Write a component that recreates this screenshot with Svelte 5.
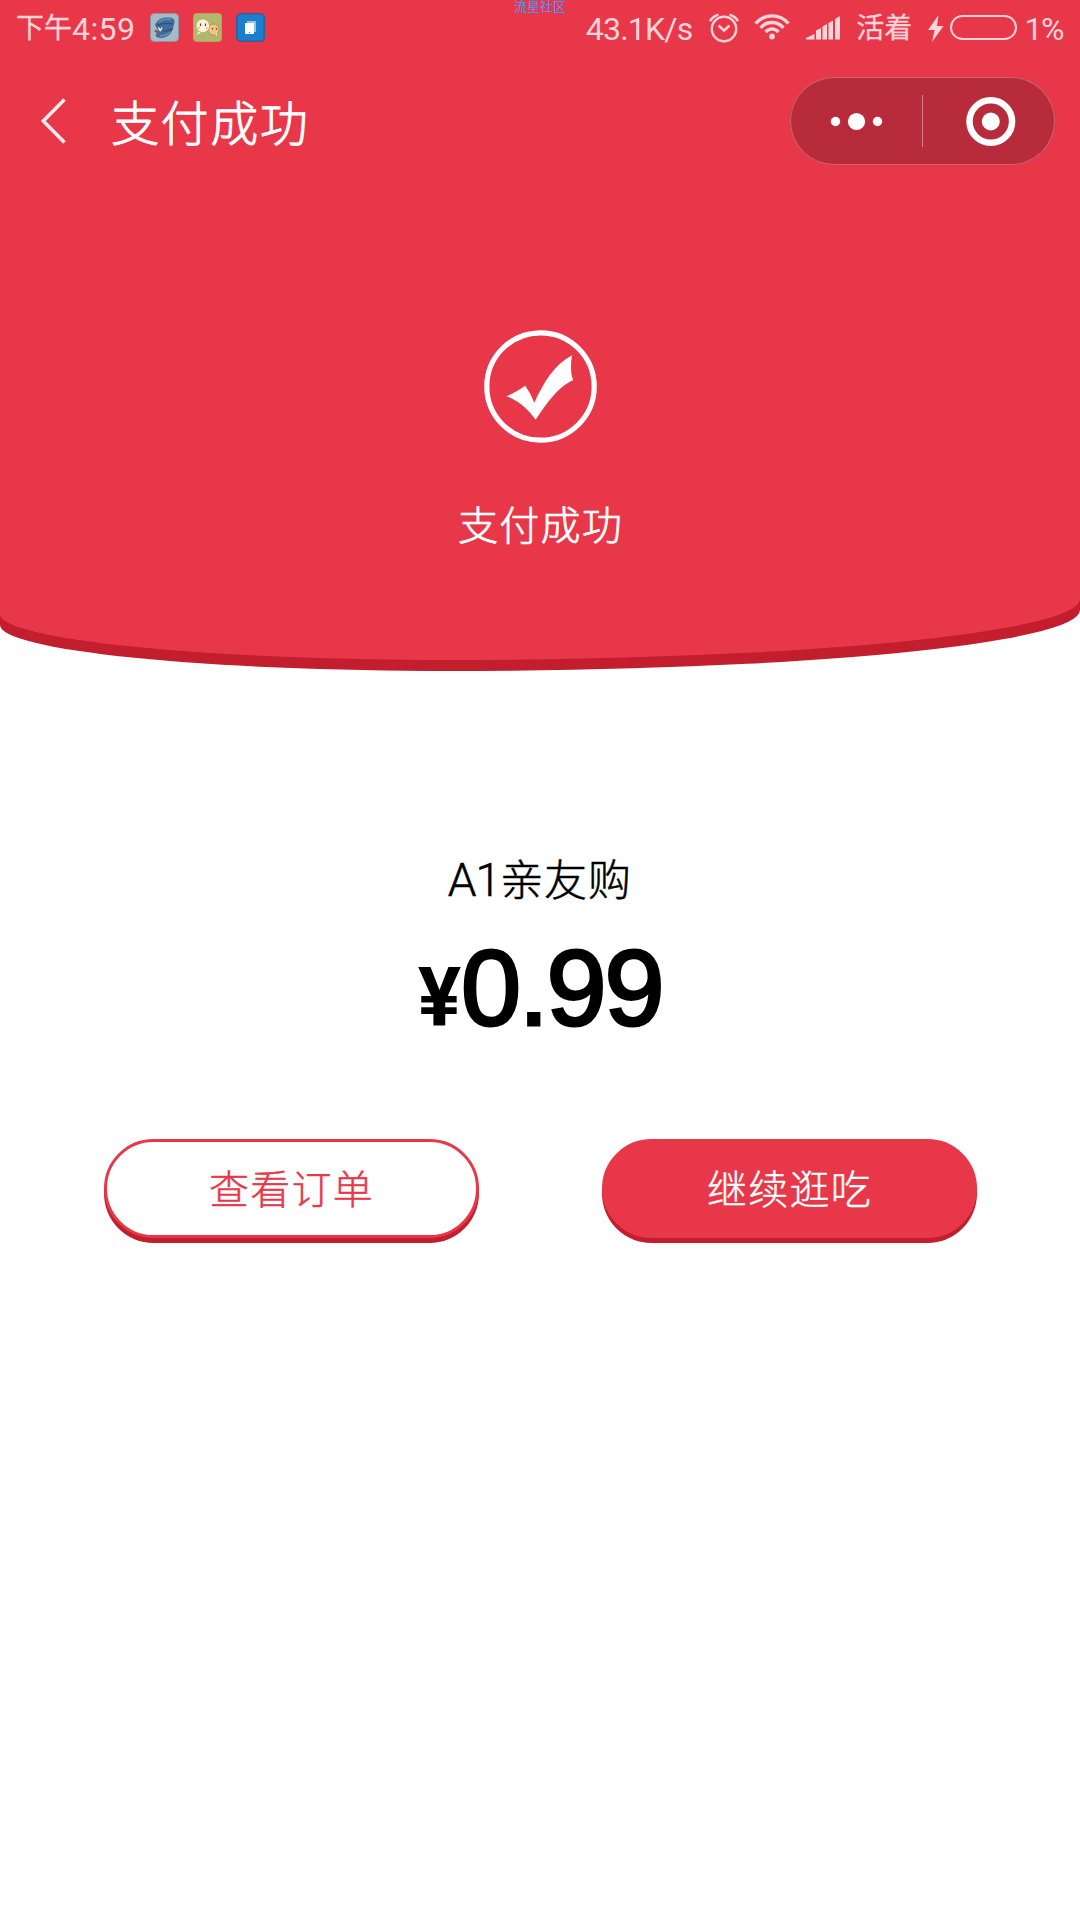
<script lang="ts">
	const status = {
		time: "下午",
		clock: "4:59",
		speed: "43.1K/s",
		carrier: "活着",
		battery: "1%",
	};

	const order = {
		name: "亲友购",
		prefix: "A1",
		price: "0.99",
	};
</script>

<div class="page">
	<header class="hero">
		<div class="watermark">流星社区</div>

		<div class="status">
			<div class="left">
				<span class="cn">{status.time}</span><span class="clock">{status.clock}</span>
				<svg class="app first" width="29" height="29" viewBox="0 0 29 29">
					<rect x=".5" y=".5" width="28" height="28" rx="4" fill="#a9bac7" stroke="#8799a9" />
					<path d="M5 12C7 7 11 4.500 17 4.500c6-.5 8 2 7.500 5l-2 7c-1 5-7 9-12 8.500-4-.5-6-2-4-4.500l1.500-3z" fill="#416d9b" />
					<path d="M7 12.500c4-2 9-3 16-1.500M13 18.500c4 0 7-1 10-3" fill="none" stroke="#2d5077" stroke-width="1.200" />
					<path d="M9 9.500c3-3 7-4 12-3M10 23c4 0 7-1 10-4" fill="none" stroke="#6591bb" stroke-width="1.400" />
					<path d="M4 18l2-1.500 4 3.500-3 .5z" fill="#8b5659" />
					<path d="M8.500 14.500l1.700 3 2-3" fill="none" stroke="#fff" stroke-width="1.300" />
				</svg>
				<svg class="app" width="29" height="29" viewBox="0 0 29 29">
					<rect x=".5" y=".5" width="28" height="28" rx="3" fill="#aeb96c" stroke="#c99b61" />
					<circle cx="20.500" cy="16.500" r="5.500" fill="#efc780" stroke="#c58c50" />
					<circle cx="9.800" cy="12.800" r="6.800" fill="#f7f4d9" stroke="#b9b184" />
					<path d="M5 18l-1 4 4-2M22 21l2 2v-3" fill="#f4e8c0" />
					<path d="M7.500 10.500v2.500M12.500 10.500v2.500M19.500 15v1.500M23.500 15v1.500" stroke="#633e2b" stroke-width="1.200" />
					<path d="M5 15h1.500M13 15h1.500" stroke="#ee9287" stroke-width="1.500" />
				</svg>
				<svg class="app" width="29" height="29" viewBox="0 0 29 29">
					<rect x=".8" y=".8" width="27.400" height="27.400" rx="4" fill="#1c7fce" stroke="#315f9b" stroke-width="1.600" />
					<path d="M11 8h9v11h-9z" fill="#8fc3ed" />
					<path d="M9 10h9v11H9z" fill="#fff" />
					<path d="M13 19h1v1h-1z" fill="#1c7fce" />
				</svg>
			</div>
			<div class="right">
				<span class="speed">{status.speed}</span>
				<svg class="alarm" width="30" height="30" viewBox="0 0 30 30" fill="none" stroke="currentColor">
					<circle cx="15" cy="16" r="12.200" stroke-width="2.400" />
					<path d="M1 8Q4 3 9.500 1.700M20.500 1.700Q26 3 29 8" stroke-width="2.600" />
					<path d="M9.500 12.500l5.500 5 5.500-5" stroke-width="2.600" />
				</svg>
				<svg class="wifi" width="36" height="27" viewBox="0 0 36 27" fill="none" stroke="currentColor" stroke-width="3.400">
					<path d="M1.500 10.500C10.500 .3 25.500 .3 34.500 10.500" />
					<path d="M6.500 14.800c6.500-7 16.500-7 23 0" />
					<path d="M11.500 19c4-4 9-4 13 0" />
					<circle cx="18" cy="23.500" r="2.900" fill="currentColor" stroke="none" />
				</svg>
				<svg class="signal" width="34" height="24" viewBox="0 0 34 24" fill="currentColor">
					<path d="M0 23.500v-1.500l8.500-4v5.500zM10 23.500v-9l5-2.500v11.500zM16.500 23.500v-13l4.500-2.500v15.500zM22.500 23.500V7L27 4.500v19zM29 23.500V3l5-3v23.500z" />
				</svg>
				<span class="cn carrier">{status.carrier}</span>
				<svg class="bolt" width="16" height="27" viewBox="0 0 16 27" fill="currentColor">
					<path d="M10.500 0L0 15h6.500L4 27 15.500 11H9z" />
				</svg>
				<span class="battery"><i></i></span>
				<span class="percent">{status.battery}</span>
			</div>
		</div>

		<nav>
			<svg width="26" height="46" viewBox="0 0 26 46" fill="none" stroke="#ffe9eb" stroke-width="3.600">
				<path d="M24.500 1.500L3.300 23l21.200 21.500" />
			</svg>
			<h1>支付成功</h1>
			<div class="capsule">
				<svg width="265" height="88" viewBox="0 0 265 88" fill="#fff">
					<circle cx="45.500" cy="44.500" r="4.700" />
					<circle cx="66.500" cy="44.500" r="8.600" />
					<circle cx="87.500" cy="44.500" r="4.700" />
					<path d="M132 18h1v52h-1z" opacity=".4" />
					<circle cx="200.800" cy="44.500" r="21.300" fill="none" stroke="#fff" stroke-width="6.500" />
					<circle cx="200.800" cy="44.500" r="9" />
				</svg>
			</div>
		</nav>

		<div class="result">
			<svg width="113" height="113" viewBox="0 0 113 113">
				<circle cx="56.500" cy="56.500" r="53.700" fill="none" stroke="#fff" stroke-width="5.200" />
				<path
					d="M22.700 66.300Q32.500 62 41.300 55.700Q46.500 63 50.300 72.700C60 52 70 35 88 25.300Q85.500 41 89 50.300C75 56 62 74 51.700 89.700C41 76 34 71 22.700 66.300z"
					fill="#fff"
				/>
			</svg>
			<p>支付成功</p>
		</div>
	</header>

	<main>
		<div class="name"><span>{order.prefix}</span>{order.name}</div>
		<div class="price"><span>¥</span>{order.price}</div>
		<div class="actions">
			<button class="outline">查看订单</button>
			<button class="solid">继续逛吃</button>
		</div>
	</main>
</div>

<style>
	:global(body) {
		background: #fff;
	}

	.page {
		width: 1080px;
		height: 1920px;
		overflow: hidden;
		background: #fff;
		font-family: "Noto Sans CJK SC", sans-serif;
		font-weight: 300;
	}

	.hero {
		position: relative;
		box-sizing: border-box;
		height: 660px;
		color: #fff;
		background: #e83749;
		border-radius: 0 0 630px 450px / 0 0 61px 46px;
		box-shadow: 0 11px 0 #c21e2e;
	}

	.watermark {
		position: absolute;
		top: 0;
		left: 514px;
		font-family: "Liberation Sans", "Noto Sans CJK SC", sans-serif;
		font-size: 13px;
		font-weight: 400;
		line-height: 14px;
		color: #3d9bff;
	}

	.status {
		display: flex;
		justify-content: space-between;
		box-sizing: border-box;
		height: 56px;
		padding: 0 17px 0 16px;
		font-family: Roboto, "Noto Sans CJK SC", sans-serif;
		font-size: 32px;
		font-weight: 400;
		line-height: 58px;
		color: #ffd3d8;
	}

	.left,
	.right {
		display: flex;
		align-items: center;
	}

	.status span:not(.battery) {
		padding-top: 2px;
	}

	.status .cn {
		padding-top: 6px;
		font-size: 28px;
		-webkit-text-stroke: 0.3px currentColor;
	}

	.clock {
		letter-spacing: 0.4px;
	}

	.app {
		margin: 0 0 1px 14px;
	}

	.app.first {
		margin-left: 15px;
	}

	.speed {
		letter-spacing: -0.8px;
	}

	.alarm {
		margin: 0 0 1px 17px;
	}

	.wifi {
		margin: 0 0 3px 15px;
	}

	.signal {
		margin-left: 16px;
	}

	.carrier {
		margin-left: 16px;
	}

	.bolt {
		margin-left: 16px;
	}

	.battery {
		display: flex;
		align-items: center;
		justify-content: flex-end;
		box-sizing: border-box;
		width: 67px;
		height: 25px;
		margin: 0 0 1px 6px;
		padding-right: 1px;
		border: 2px solid currentColor;
		border-radius: 13px;
	}

	.battery i {
		width: 1px;
		height: 8px;
		background: #6f8a1c;
	}

	.percent {
		margin-left: 7px;
		letter-spacing: -1.4px;
	}

	nav {
		display: flex;
		align-items: center;
		height: 129px;
		padding: 0 25px 0 40px;
	}

	h1 {
		margin: -2px 0 0 45px;
		font-size: 48px;
		font-weight: 300;
		letter-spacing: 1.600px;
		-webkit-text-stroke: 0.9px currentColor;
	}

	.capsule {
		box-sizing: border-box;
		width: 265px;
		height: 88px;
		margin-left: auto;
		background: #b82b3a;
		border-radius: 44px;
		box-shadow: inset 0 0 0 1px #cd6570;
	}

	.result {
		display: flex;
		flex-direction: column;
		align-items: center;
		padding-top: 145px;
	}

	.result p {
		margin: 50px 0 0;
		font-size: 40px;
		line-height: 60px;
		letter-spacing: 1.300px;
		text-indent: 1px;
		-webkit-text-stroke: 0.7px currentColor;
	}

	main {
		color: #000;
	}

	.name {
		display: flex;
		justify-content: center;
		align-items: baseline;
		margin-top: 187px;
		font-size: 43px;
		line-height: 60px;
		letter-spacing: 1px;
		-webkit-text-stroke: 0.5px currentColor;
	}

	.name span {
		font-family: Roboto, sans-serif;
		font-size: 46px;
		letter-spacing: -1px;
	}

	.price {
		display: flex;
		justify-content: center;
		align-items: baseline;
		height: 130px;
		margin-top: 13px;
		font-family: "Liberation Sans", sans-serif;
		font-size: 108px;
		font-weight: 400;
		line-height: 130px;
		letter-spacing: -2.200px;
		-webkit-text-stroke: 3px currentColor;
	}

	.price span {
		margin-right: 2px;
		font-family: Roboto, sans-serif;
		font-size: 81px;
		font-weight: 700;
		-webkit-text-stroke: 0;
	}

	.actions {
		display: flex;
		justify-content: space-between;
		margin-top: 86px;
		padding: 0 103px 0 104px;
	}

	button {
		box-sizing: border-box;
		width: 375px;
		height: 99px;
		padding: 0 0 4px;
		font: inherit;
		font-size: 40px;
		letter-spacing: 1.300px;
		border: 3px solid #e83749;
		border-radius: 50px;
		box-shadow: 0 5px 0 #c21e2e;
		-webkit-text-stroke: 0.4px currentColor;
	}

	.outline {
		color: #e83749;
		background: #fff;
	}

	.solid {
		color: #fff;
		background: #e83749;
	}
</style>
